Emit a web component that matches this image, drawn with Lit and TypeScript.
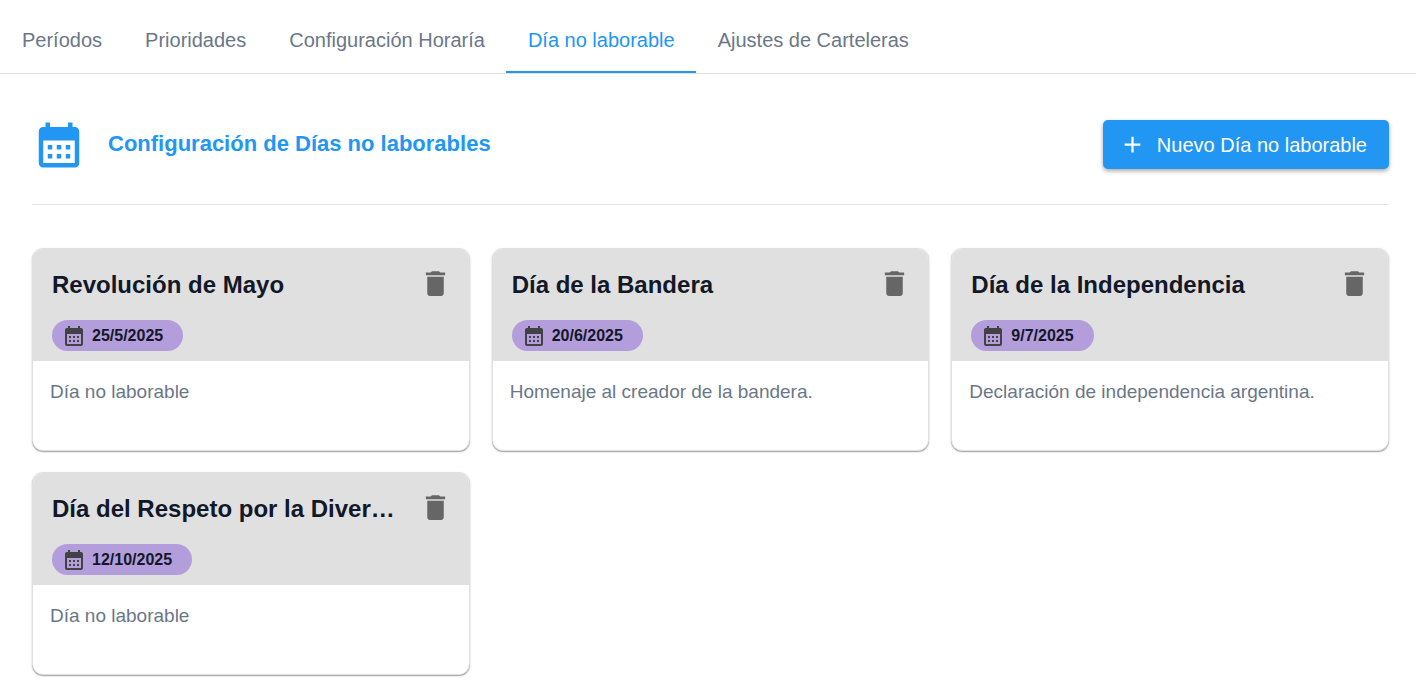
import { LitElement, html, css, svg } from "lit";
import { customElement, property, state } from "lit/decorators.js";

interface Holiday {
  name: string;
  date: string;
  description: string;
}

const calendarPath = svg`<path fill="currentColor" d="M19 4h-1V2h-2v2H8V2H6v2H5c-1.11 0-1.99.9-1.99 2L3 20c0 1.1.89 2 2 2h14c1.1 0 2-.9 2-2V6c0-1.1-.9-2-2-2zm0 16H5V10h14v10zM9 14H7v-2h2v2zm4 0h-2v-2h2v2zm4 0h-2v-2h2v2zm-8 4H7v-2h2v2zm4 0h-2v-2h2v2zm4 0h-2v-2h2v2z"/>`;

@customElement("holiday-card")
export class HolidayCard extends LitElement {
  @property({ attribute: false }) holiday!: Holiday;

  static styles = css`
    :host {
      display: block;
      min-width: 0;
    }
    .card {
      box-sizing: border-box;
      height: 100%;
      border: 1px solid #e0e0e0;
      border-radius: 11px;
      overflow: hidden;
      background: #fff;
      box-shadow: 0 1px 1px rgba(0, 0, 0, 0.3), 0 1px 3px rgba(0, 0, 0, 0.1);
    }
    .head {
      background: #e0e0e0;
      padding: 18px 17px 10px 19px;
    }
    .top {
      display: flex;
      align-items: flex-start;
      gap: 16px;
      margin-bottom: 19px;
    }
    .title {
      flex: 1;
      min-width: 0;
      margin: 0;
      padding-top: 2px;
      font-size: 24px;
      line-height: 32px;
      font-weight: 700;
      color: #121828;
      white-space: nowrap;
      overflow: hidden;
      text-overflow: ellipsis;
    }
    .delete {
      flex: none;
      display: block;
      padding: 0;
      border: 0;
      background: none;
      color: #666;
      cursor: pointer;
    }
    .delete svg {
      display: block;
      width: 33px;
      height: 33px;
    }
    .chip {
      display: inline-flex;
      align-items: center;
      gap: 6px;
      height: 31px;
      padding: 0 20px 0 10px;
      border-radius: 16px;
      background: #b39ddb;
      color: #121828;
      font-size: 16px;
      font-weight: 700;
      vertical-align: top;
    }
    .chip svg {
      width: 24px;
      height: 24px;
      color: #424242;
    }
    .text {
      margin: 0;
      padding: 17px 17px 45px;
      font-size: 19px;
      line-height: 27px;
      color: #6b7788;
    }
  `;

  render() {
    const { name, date, description } = this.holiday;
    return html`
      <article class="card">
        <div class="head">
          <div class="top">
            <h2 class="title">${name}</h2>
            <button class="delete" type="button" aria-label="Eliminar ${name}">
              <svg viewBox="0 0 24 24" aria-hidden="true">
                <path fill="currentColor" d="M6 19c0 1.1.9 2 2 2h8c1.1 0 2-.9 2-2V7H6v12zM19 4h-3.5l-1-1h-5l-1 1H5v2h14V4z" />
              </svg>
            </button>
          </div>
          <span class="chip">
            <svg viewBox="0 0 24 24" aria-hidden="true">${calendarPath}</svg>
            <time>${date}</time>
          </span>
        </div>
        <p class="text">${description}</p>
      </article>
    `;
  }
}

@customElement("app-root")
export class AppRoot extends LitElement {
  @state() private active = 3;

  private tabs = [
    "Períodos",
    "Prioridades",
    "Configuración Horaría",
    "Día no laborable",
    "Ajustes de Carteleras",
  ];

  private holidays: Holiday[] = [
    { name: "Revolución de Mayo", date: "25/5/2025", description: "Día no laborable" },
    { name: "Día de la Bandera", date: "20/6/2025", description: "Homenaje al creador de la bandera." },
    { name: "Día de la Independencia", date: "9/7/2025", description: "Declaración de independencia argentina." },
    { name: "Día del Respeto por la Diversidad Cultural", date: "12/10/2025", description: "Día no laborable" },
  ];

  static styles = css`
    :host {
      display: block;
      font-family: "Liberation Sans", Arial, sans-serif;
      background: #fff;
    }
    .tabs {
      display: flex;
      border-bottom: 1px solid #e0e0e0;
    }
    .tab {
      padding: 28px 21px 19px 22px;
      border: 0;
      border-bottom: 2px solid transparent;
      background: none;
      font-family: inherit;
      font-size: 20px;
      line-height: 24px;
      color: #6b7788;
      white-space: nowrap;
      cursor: pointer;
    }
    .tab[aria-selected="true"] {
      color: #2196f3;
      border-bottom-color: #2196f3;
    }
    .panel {
      padding: 44px 27px 22px 32px;
    }
    .header {
      display: flex;
      align-items: flex-start;
      gap: 22px;
      padding-bottom: 32px;
      border-bottom: 1px solid #e5e7eb;
      margin-bottom: 43px;
    }
    .logo {
      flex: none;
      width: 54px;
      height: 54px;
      color: #2196f3;
    }
    .heading {
      flex: 1;
      margin: 0;
      font-size: 22px;
      line-height: 52px;
      font-weight: 700;
      color: #2196f3;
    }
    .add {
      display: flex;
      align-items: center;
      gap: 11px;
      height: 49px;
      margin-top: 2px;
      padding: 0 22px 0 16px;
      border: 0;
      border-radius: 5px;
      background: #2196f3;
      box-shadow: 0 2px 4px rgba(0, 0, 0, 0.35);
      color: #fff;
      font-family: inherit;
      font-size: 20px;
      line-height: 24px;
      white-space: nowrap;
      cursor: pointer;
    }
    .add svg {
      width: 27px;
      height: 27px;
    }
    .grid {
      display: grid;
      grid-template-columns: repeat(3, minmax(0, 1fr));
      gap: 21px 22px;
    }
  `;

  render() {
    return html`
      <div class="tabs" role="tablist">
        ${this.tabs.map(
          (label, i) => html`<button
            class="tab"
            type="button"
            role="tab"
            aria-selected=${i === this.active ? "true" : "false"}
            @click=${() => (this.active = i)}
          >${label}</button>`
        )}
      </div>
      <main class="panel">
        <header class="header">
          <svg class="logo" viewBox="0 0 24 24" aria-hidden="true">${calendarPath}</svg>
          <h1 class="heading">Configuración de Días no laborables</h1>
          <button class="add" type="button">
            <svg viewBox="0 0 24 24" aria-hidden="true">
              <path fill="currentColor" d="M19 13h-6v6h-2v-6H5v-2h6V5h2v6h6v2z" />
            </svg>
            Nuevo Día no laborable
          </button>
        </header>
        <section class="grid">
          ${this.holidays.map((h) => html`<holiday-card .holiday=${h}></holiday-card>`)}
        </section>
      </main>
    `;
  }
}
